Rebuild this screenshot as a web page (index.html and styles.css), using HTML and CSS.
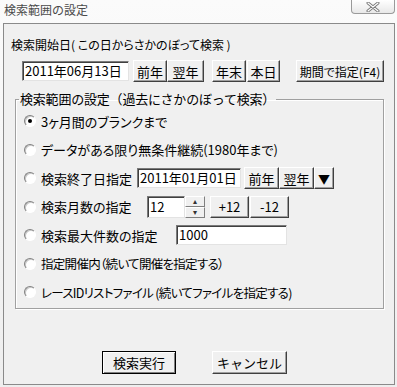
FILE: index.html
```html
<!DOCTYPE html>
<html lang="ja">
  <head>
    <meta charset="UTF-8" />
    <title>検索範囲の設定</title>
    <link rel="stylesheet" href="styles.css">
  </head>
  <body>
    <div class="window">
      <div class="titlebar">
        <span class="title">検索範囲の設定</span>
        <span class="close">
          <svg width="14" height="10" viewBox="0 0 14 10">
            <path d="M2 1 L12 9 M12 1 L2 9" stroke="#777" stroke-width="3" stroke-linecap="round"/>
            <path d="M2 1 L12 9 M12 1 L2 9" stroke="#fff" stroke-width="1.2" stroke-linecap="round"/>
          </svg>
        </span>
      </div>
      <div class="client">
        <div class="start">
          <div class="label">検索開始日( この日からさかのぼって検索 )</div>
          <div class="date-row">
            <div class="edit date-main">2011年06月13日</div>
            <button class="btn b-prev">前年</button>
            <button class="btn b-next">翌年</button>
            <button class="btn b-end">年末</button>
            <button class="btn b-today">本日</button>
            <button class="btn b-range">期間で指定(F4)</button>
          </div>
        </div>

        <fieldset class="group">
          <legend>検索範囲の設定（過去にさかのぼって検索）</legend>
          <div class="row">
            <span class="radio checked"></span>
            <span class="text">3ヶ月間のブランクまで</span>
          </div>
          <div class="row">
            <span class="radio"></span>
            <span class="text">データがある限り無条件継続(1980年まで)</span>
          </div>
          <div class="row">
            <span class="radio"></span>
            <span class="text t-end">検索終了日指定</span>
            <div class="edit date-end">2011年01月01日</div>
            <button class="btn b-small b-prev2">前年</button>
            <button class="btn b-small b-next2">翌年</button>
            <button class="btn b-small b-drop">▼</button>
          </div>
          <div class="row">
            <span class="radio"></span>
            <span class="text t-month">検索月数の指定</span>
            <div class="edit months">12</div>
            <div class="spin">
              <span class="spin-btn">▴</span>
              <span class="spin-btn">▾</span>
            </div>
            <button class="btn b-small b-plus">+12</button>
            <button class="btn b-small b-minus">-12</button>
          </div>
          <div class="row">
            <span class="radio"></span>
            <span class="text t-max">検索最大件数の指定</span>
            <div class="edit max">1000</div>
          </div>
          <div class="row">
            <span class="radio"></span>
            <span class="text narrow">指定開催内（続いて開催を指定する）</span>
          </div>
          <div class="row">
            <span class="radio"></span>
            <span class="text narrow">レースIDリストファイル (続いてファイルを指定する)</span>
          </div>
        </fieldset>

        <div class="actions">
          <button class="btn b-run">検索実行</button>
          <button class="btn b-cancel">キャンセル</button>
        </div>
      </div>
    </div>
  </body>
</html>
```

FILE: styles.css
```css
body {
  margin: 0;
  background: #f3f3f3;
  font-family: "Noto Sans CJK JP", "Noto Sans", sans-serif;
  font-size: 13px;
  color: #000;
}

.window {
  width: 397px;
  height: 387px;
  background: linear-gradient(#fbfbfb, #eeeeee);
  overflow: hidden;
}

.titlebar {
  height: 23px;
  display: flex;
  align-items: flex-start;
  justify-content: space-between;
}

.title {
  margin: 2px 0 0 4px;
  font-size: 12px;
  line-height: 16px;
  color: #4a4a4a;
}

.close {
  width: 42px;
  height: 13px;
  margin-right: 2px;
  border: 1px solid #9a9a9a;
  border-top: none;
  border-radius: 0 0 4px 4px;
  background: linear-gradient(#ffffff, #e8e8e8);
  display: flex;
  align-items: center;
  justify-content: center;
}

.client {
  margin-left: 3px;
  width: 390px;
  height: 360px;
  border: 1px solid #8a8a8a;
  background: #f0f0f0;
}

.start {
  padding: 13px 0 0 7px;
}

.label {
  line-height: 16px;
  height: 16px;
  font-size: 12px;
  font-feature-settings: "palt";
}

.date-row {
  display: flex;
  align-items: center;
  height: 22px;
  margin: 7px 0 0 11px;
}

.edit {
  box-sizing: border-box;
  height: 20px;
  background: #fff;
  border: 1px solid;
  border-color: #7a7a7a #e3e3e3 #e3e3e3 #7a7a7a;
  box-shadow: inset 1px 1px #404040;
  padding: 0 0 0 2px;
  line-height: 18px;
  font-size: 13px;
  white-space: nowrap;
  overflow: hidden;
}

.btn {
  box-sizing: border-box;
  height: 22px;
  padding: 0;
  font-family: inherit;
  font-size: 13px;
  color: #000;
  background: #f0f0f0;
  border: 1px solid;
  border-color: #fff #404040 #404040 #fff;
  box-shadow: inset -1px -1px #a0a0a0;
  line-height: 19px;
  white-space: nowrap;
}

.date-main { width: 107px; }
.b-prev { width: 34px; margin-left: 4px; }
.b-next { width: 37px; margin-left: 0; }
.b-end { width: 34px; margin-left: 8px; }
.b-today { width: 33px; margin-left: 1px; }
.b-range {
  width: 88px;
  margin-left: 16px;
  font-size: 12px;
  font-feature-settings: "palt";
}

.group {
  box-sizing: border-box;
  width: 369px;
  margin: 10px 0 0 11px;
  padding: 1px 0 1px 0;
  border: 1px solid #a0a0a0;
  box-shadow: 1px 1px #fff, inset 1px 1px #fff;
  min-width: 0;
}

.group legend {
  padding: 0 1px;
  margin-left: 3px;
  line-height: 14px;
  letter-spacing: -0.2px;
}

.row {
  height: 28.5px;
  display: flex;
  align-items: center;
}

.radio {
  box-sizing: border-box;
  width: 12px;
  height: 12px;
  margin-left: 8px;
  border-radius: 50%;
  border: 1px solid;
  border-color: #808080 #fff #fff #808080;
  background: #fff;
  box-shadow: inset 1px 1px #c8c8c8;
  display: flex;
  align-items: center;
  justify-content: center;
}

.radio.checked::after {
  content: "";
  width: 4px;
  height: 4px;
  border-radius: 50%;
  background: #000;
}

.text {
  margin-left: 5px;
  white-space: nowrap;
  font-feature-settings: "palt";
}

.text.narrow {
  font-size: 12.5px;
  letter-spacing: -0.7px;
}

.t-end { width: 96px; }
.t-month { width: 106px; }
.t-max { width: 135px; }

.date-end { width: 104px; }
.b-small { height: 22px; line-height: 19px; }
.b-prev2 { width: 35px; margin-left: 3px; }
.b-next2 { width: 35px; margin-left: 0; }
.b-drop { width: 20px; margin-left: 0; font-size: 12px; }

.months { width: 38px; height: 22px; line-height: 20px; }
.spin {
  width: 20px;
  height: 22px;
  display: flex;
  flex-direction: column;
}
.spin-btn {
  flex: 1;
  box-sizing: border-box;
  background: #f0f0f0;
  border: 1px solid;
  border-color: #fff #808080 #808080 #fff;
  font-size: 8px;
  line-height: 8px;
  text-align: center;
  color: #333;
}
.b-plus { width: 39px; margin-left: 5px; }
.b-minus { width: 39px; margin-left: 1px; }

.max { width: 111px; height: 20px; }

.actions {
  display: flex;
  margin: 42px 0 0 98px;
}

.b-run {
  width: 74px;
  height: 23px;
  border-color: #000;
  box-shadow: inset 1px 1px #fff, inset -1px -1px #808080;
}

.b-cancel {
  width: 75px;
  height: 23px;
  margin-left: 36px;
}
```
